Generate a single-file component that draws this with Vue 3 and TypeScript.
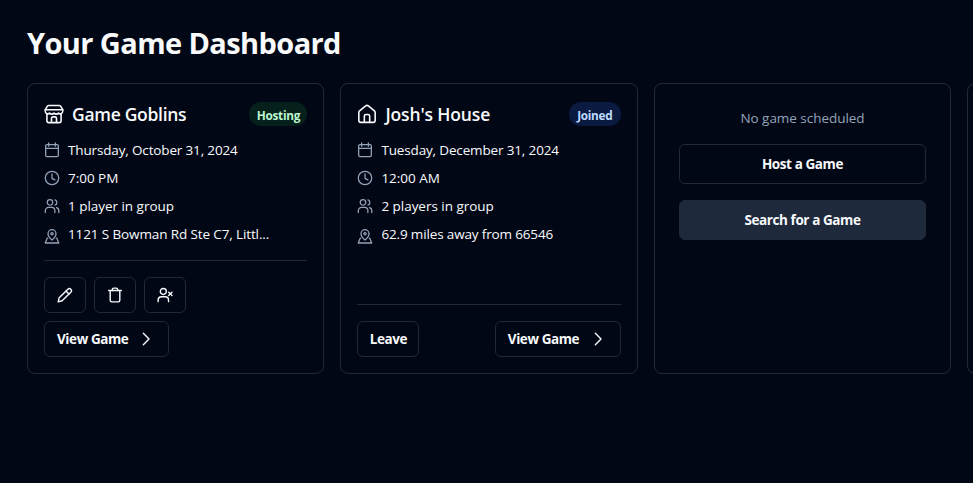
<script setup lang="ts">
type Shape = string[]

const icons: Record<string, Shape> = {
  shop: [
    'M5.800 1.700h12.400c.7 0 1.300.3 1.700.9l2.600 4.200H1.500l2.600-4.200c.4-.6 1-.9 1.700-.9Z',
    'M1.500 6.800v2a3.100 3.100 0 0 0 5.200 2.200 3.700 3.700 0 0 0 5.300 0 3.700 3.700 0 0 0 5.300 0 3.100 3.100 0 0 0 5.200-2.200v-2',
    'M3.500 11.800V20a2.300 2.300 0 0 0 2.300 2.300h12.400a2.300 2.300 0 0 0 2.300-2.300v-8.200',
    'M9 22v-4.800a1.800 1.800 0 0 1 1.800-1.800h2.400a1.800 1.800 0 0 1 1.800 1.800V22',
  ],
  home: [
    'M8.800 21.800v-7.300a2 2 0 0 1 2-2h2.400a2 2 0 0 1 2 2v7.300',
    'M2.200 10.200a2.500 2.500 0 0 1 .9-1.900l7.300-6a2.500 2.500 0 0 1 3.200 0l7.300 6a2.500 2.500 0 0 1 .9 1.900v9.300a2.500 2.500 0 0 1-2.500 2.500H4.700a2.500 2.500 0 0 1-2.500-2.500Z',
  ],
  calendar: [
    'M7 1.500v4.700M17 1.500v4.700M2.500 9.700h19',
    'M4.500 3.900h15a2 2 0 0 1 2 2V20a2 2 0 0 1-2 2h-15a2 2 0 0 1-2-2V5.900a2 2 0 0 1 2-2Z',
  ],
  clock: ['M12 1.900a10.100 10.100 0 1 0 0 20.200 10.100 10.100 0 0 0 0-20.200Z', 'M12 6v6.500l4.300 2.300'],
  users: [
    'M9 2.500a4.100 4.100 0 1 0 0 8.200 4.100 4.100 0 0 0 0-8.200Z',
    'M2 21.800V19a4.800 4.800 0 0 1 4.800-4.800h4.700a4.800 4.800 0 0 1 4.800 4.800v2.800',
    'M16.500 2.700a4.100 4.100 0 0 1 0 7.800M18.800 14.300a4.800 4.800 0 0 1 3.400 4.700v2.800',
  ],
  pin: [
    'M12 18.200c-3.500-3-6-6.200-6-9.600a6 6 0 0 1 12 0c0 3.400-2.500 6.600-6 9.600Z',
    'M12 7a1.700 1.700 0 1 0 0 3.400A1.700 1.700 0 0 0 12 7Z',
    'M5.500 15.200H4.800L1.900 22.500h20.200l-2.900-7.300h-.7',
  ],
  pen: ['m16.300 3.300-13 13L1.700 22.300l6-1.600 13-13a3.110 3.110 0 0 0-4.400-4.400Z', 'm13.500 6.100 4.400 4.400'],
  trash: ['M2.500 5.300h19M4.800 5.300V20a2.300 2.300 0 0 0 2.300 2.300h9.800a2.300 2.300 0 0 0 2.300-2.300V5.300', 'M8 5.300V3.700a2 2 0 0 1 2-2h4a2 2 0 0 1 2 2v1.600'],
  userX: [
    'M9.500 2.200a4.500 4.500 0 1 0 0 9 4.500 4.500 0 0 0 0-9Z',
    'M1.700 22v-2.300a5 5 0 0 1 5-5h5.600a5 5 0 0 1 5 5V22',
    'm17.500 7.700 5 5M22.500 7.700l-5 5',
  ],
  chevron: ['m8 3.500 8.500 8.500L8 20.500'],
}

interface Game {
  name: string
  icon: string
  status: 'Hosting' | 'Joined'
  details: { icon: string; text: string; cls: string }[]
}

const games: Game[] = [
  {
    name: 'Game Goblins',
    icon: 'shop',
    status: 'Hosting',
    details: [
      { icon: 'calendar', text: 'Thursday, October 31, 2024', cls: 'date' },
      { icon: 'clock', text: '7:00 PM', cls: 'time' },
      { icon: 'users', text: '1 player in group', cls: 'group' },
      { icon: 'pin', text: '1121 S Bowman Rd Ste C7, Littl...', cls: 'address' },
    ],
  },
  {
    name: "Josh's House",
    icon: 'home',
    status: 'Joined',
    details: [
      { icon: 'calendar', text: 'Tuesday, December 31, 2024', cls: 'date' },
      { icon: 'clock', text: '12:00 AM', cls: 'time' },
      { icon: 'users', text: '2 players in group', cls: 'group' },
      { icon: 'pin', text: '62.9 miles away from 66546', cls: 'distance' },
    ],
  },
]
const hostActions = ['pen', 'trash', 'userX']
</script>

<template>
  <main class="page">
    <h1>Your Game Dashboard</h1>
    <div class="cards">
      <article v-for="game in games" :key="game.name" class="card">
        <header>
          <svg class="icon large" viewBox="0 0 24 24"><path v-for="d in icons[game.icon]" :key="d" :d="d" /></svg>
          <h2 :class="game.icon">{{ game.name }}</h2>
          <span class="badge" :class="game.status.toLowerCase()">{{ game.status }}</span>
        </header>
        <ul>
          <li v-for="row in game.details" :key="row.text">
            <svg class="icon muted" :class="row.icon" viewBox="0 0 24 24"><path v-for="d in icons[row.icon]" :key="d" :d="d" /></svg>
            <span :class="row.cls">{{ row.text }}</span>
          </li>
        </ul>
        <footer>
          <div v-if="game.status === 'Hosting'" class="actions">
            <button v-for="name in hostActions" :key="name" class="square">
              <svg class="icon" viewBox="0 0 24 24"><path v-for="d in icons[name]" :key="d" :d="d" /></svg>
            </button>
          </div>
          <button v-else class="leave">Leave</button>
          <button class="view">
            <span>View Game</span>
            <svg class="icon chevron" viewBox="0 0 24 24"><path :d="icons.chevron[0]" /></svg>
          </button>
        </footer>
      </article>
      <article class="card empty">
        <p>No game scheduled</p>
        <button class="wide">Host a Game</button>
        <button class="wide filled">Search for a Game</button>
      </article>
      <article class="card"></article>
    </div>
  </main>
</template>

<style>
body { margin: 0; background: #020716; overflow: hidden; }
</style>

<style scoped>
.page {
  box-sizing: border-box;
  width: 973px;
  height: 483px;
  padding: 25px 0 0 27px;
  overflow: hidden;
  background: #020716;
  color: #f8fafc;
  font-family: "Open Sans", "Noto Sans", sans-serif;
  font-size: 13.5px;
  line-height: 20px;
}
h1, h2, p, ul { margin: 0; padding: 0; }
h1 { font-size: 29px; line-height: 36px; font-weight: 700; letter-spacing: -0.6px; white-space: nowrap; }
.cards {
  display: grid;
  grid-template-columns: repeat(4, 297.4px);
  gap: 16px;
  height: 291px;
  margin-top: 22px;
}
.card {
  box-sizing: border-box;
  display: flex;
  flex-direction: column;
  min-width: 0;
  padding: 16px;
  border: 1px solid #1e293b;
  border-radius: 8px;
}
header { display: flex; align-items: center; height: 28px; margin-bottom: 12px; }
h2 { margin-left: 8px; font-size: 17.5px; line-height: 28px; font-weight: 600; letter-spacing: -0.14px; white-space: nowrap; }
h2.shop { letter-spacing: -0.3px; }
.badge {
  display: grid;
  place-items: center;
  box-sizing: border-box;
  width: 58px;
  height: 24px;
  padding-top: 1px;
  margin-left: auto;
  border-radius: 12px;
  font-size: 11.8px;
  font-weight: 700;
  letter-spacing: -0.3px;
}
.hosting { background: #06201c; color: #bbf7d0; }
.joined { width: 52px; background: #0a1a40; color: #bfdbfe; }
ul { display: flex; flex-direction: column; gap: 8px; list-style: none; }
li { display: flex; align-items: center; gap: 8px; height: 20px; white-space: nowrap; }
.date, .distance { letter-spacing: -0.15px; }
.address { letter-spacing: -0.12px; }
.time, .group { letter-spacing: -0.03px; }
.icon {
  flex: none;
  width: 16px;
  height: 16px;
  fill: none;
  stroke: currentColor;
  stroke-width: 2.1;
  stroke-linecap: round;
  stroke-linejoin: round;
}
.large { width: 20px; height: 20px; stroke-width: 1.9; }
.muted { color: #94a3b8; stroke-width: 1.9; }
.icon.pin { margin-top: 3px; }
footer {
  display: flex;
  flex-wrap: wrap;
  justify-content: space-between;
  gap: 8px;
  margin-top: auto;
  padding-top: 16px;
  border-top: 1px solid #1e293b;
}
.actions { display: flex; gap: 8px; width: 150px; }
button {
  box-sizing: border-box;
  display: flex;
  align-items: center;
  justify-content: center;
  height: 36px;
  padding: 0 12px;
  border: 1px solid #1e293b;
  border-radius: 6px;
  background: transparent;
  color: #f8fafc;
  font: 700 13.5px/20px "Open Sans", "Noto Sans", sans-serif;
  letter-spacing: -0.41px;
  white-space: nowrap;
}
.square { width: 42px; }
.view { justify-content: flex-start; width: 126px; }
.actions + .view { width: 125px; }
.view .icon { margin-left: auto; margin-right: 2px; }
.leave { width: 62px; }
.empty { padding: 24px; gap: 16px; }
.empty p { text-align: center; color: #94a3b8; letter-spacing: -0.04px; }
.wide { width: 100%; height: 40px; }
.filled { background: #1e293b; }
</style>
